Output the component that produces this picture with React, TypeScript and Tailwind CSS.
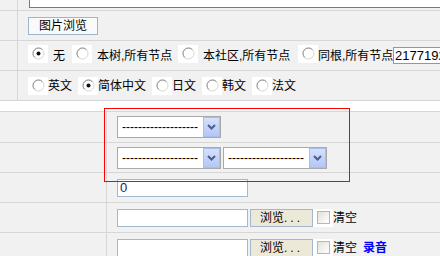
import React from "react";

function Radio({ checked = false, className = "" }: { checked?: boolean; className?: string }) {
  return (
    <span className={`inline-flex h-[18px] w-[20px] shrink-0 items-center justify-center bg-white ${className}`}>
      <svg width="13" height="13" viewBox="0 0 13 13">
        <circle cx="6.5" cy="6.5" r="5.5" fill="#fff" stroke="#d8d6cc" strokeWidth="1" />
        <path d="M2.61 10.39A5.5 5.5 0 0 1 10.39 2.61" fill="none" stroke="#8c8c8c" strokeWidth="1" />
        {checked && <circle cx="6.5" cy="6.5" r="2" fill="#111" />}
      </svg>
    </span>
  );
}

function Checkbox() {
  return (
    <span className="inline-flex h-[18px] w-[20px] shrink-0 items-center justify-center bg-white">
      <span className="block h-[13px] w-[13px] border border-[#b9b7aa] bg-gradient-to-br from-[#e2e1da] to-white" />
    </span>
  );
}

function Select({ className = "" }: { className?: string }) {
  return (
    <div className={`flex h-[22px] w-[104px] items-center border border-[#a9a9a9] bg-white ${className}`}>
      <span className="ml-[4px] flex-1 text-[12px] leading-none text-black">-------------------</span>
      <span className="flex h-[20px] w-[17px] items-center justify-center border border-[#a8bdf0] bg-gradient-to-b from-[#d5e0fc] to-[#b3c7f6]">
        <svg width="9" height="6" viewBox="0 0 9 6">
          <path d="M1 1l3.5 3.5L8 1" fill="none" stroke="#4a5f8c" strokeWidth="2" />
        </svg>
      </span>
    </div>
  );
}

function FileRow({ record = false }: { record?: boolean }) {
  return (
    <div className="flex items-center">
      <div className="h-[18px] w-[131px] border border-[#a3b8cd] bg-white" />
      <button className="ml-[2px] flex h-[18px] w-[63px] items-center justify-center border border-[#a3b8cd] bg-[#ece9d8] text-[12px] leading-none text-black">
        浏览<span className="tracking-[3px]">...</span>
      </button>
      <Checkbox />
      <span className="text-[12px] leading-none">清空</span>
      {record && <span className="ml-[6px] text-[12px] font-bold leading-none text-[#0000ff]">录音</span>}
    </div>
  );
}

export default function App() {
  return (
    <div className="relative h-[256px] w-[440px] overflow-hidden bg-[#f1f1f1] font-['Liberation_Sans','Noto_Sans_CJK_SC',sans-serif] text-[12px] text-black">
      {/* upper table */}
      <div className="flex h-[11px] border-b border-[#d6d6d6]">
        <div className="w-[18px] shrink-0 border-r border-[#d6d6d6]" />
        <div className="flex-1 pl-[11px]">
          <div className="h-[8px] border border-t-0 border-r-0 border-[#7a7a7a] bg-white" />
        </div>
      </div>
      <div className="flex h-[30px] border-b border-[#d6d6d6]">
        <div className="w-[18px] shrink-0 border-r border-[#d6d6d6]" />
        <div className="flex flex-1 items-center pl-[10px]">
          <button className="flex h-[18px] w-[70px] items-center justify-center border border-[#9cb6cf] bg-[#fafafa] text-[12px] leading-none">
            图片浏览
          </button>
        </div>
      </div>
      <div className="flex h-[30px] border-b border-[#d6d6d6]">
        <div className="w-[18px] shrink-0 border-r border-[#d6d6d6]" />
        <div className="flex flex-1 items-center whitespace-nowrap pl-[10px]">
          <Radio checked className="-mt-[4px]" />
          <span className="ml-[5px] w-[12px]">无</span>
          <Radio className="ml-[7px] -mt-[4px]" />
          <span className="ml-[5px] w-[75px]">本树,所有节点</span>
          <Radio className="ml-[6px] -mt-[4px]" />
          <span className="ml-[5px] w-[87px]">本社区,所有节点</span>
          <Radio className="ml-[8px] -mt-[4px]" />
          <span className="w-[75px]">同根,所有节点</span>
          <div className="flex h-[17px] w-[120px] shrink-0 items-center border border-[#7f9db9] bg-white pl-[1px] text-[13px] leading-none">
            217719250
          </div>
        </div>
      </div>
      <div className="flex h-[30px] border-b border-[#d6d6d6]">
        <div className="w-[18px] shrink-0 border-r border-[#d6d6d6]" />
        <div className="flex flex-1 items-center whitespace-nowrap pl-[10px]">
          <Radio />
          <span className="w-[24px]">英文</span>
          <Radio checked className="ml-[6px]" />
          <span className="w-[48px]">简体中文</span>
          <Radio className="ml-[6px]" />
          <span className="w-[24px]">日文</span>
          <Radio className="ml-[6px]" />
          <span className="w-[24px]">韩文</span>
          <Radio className="ml-[6px]" />
          <span className="w-[24px]">法文</span>
        </div>
      </div>
      <div className="h-[10px] bg-white" />

      {/* lower table */}
      <div className="border-t border-[#d6d6d6]">
        <div className="flex h-[31px] border-b border-[#d6d6d6]">
          <div className="w-[107px] shrink-0 border-r border-[#d6d6d6]" />
          <div className="flex flex-1 items-center pl-[10px]">
            <Select />
          </div>
        </div>
        <div className="flex h-[30px] border-b border-[#d6d6d6]">
          <div className="w-[107px] shrink-0 border-r border-[#d6d6d6]" />
          <div className="flex flex-1 items-center pl-[10px]">
            <Select />
            <Select className="ml-[2px]" />
          </div>
        </div>
        <div className="flex h-[30px] border-b border-[#d6d6d6]">
          <div className="w-[107px] shrink-0 border-r border-[#d6d6d6]" />
          <div className="flex flex-1 items-center pl-[10px]">
            <div className="flex h-[18px] w-[131px] items-center border border-[#a3b8cd] bg-white pl-[2px] text-[13px] leading-none text-[#202070]">
              0
            </div>
          </div>
        </div>
        <div className="flex h-[30px] border-b border-[#d6d6d6]">
          <div className="w-[107px] shrink-0 border-r border-[#d6d6d6]" />
          <div className="flex flex-1 items-center pl-[10px]">
            <FileRow />
          </div>
        </div>
        <div className="flex h-[30px] border-b border-[#d6d6d6]">
          <div className="w-[107px] shrink-0 border-r border-[#d6d6d6]" />
          <div className="flex flex-1 items-center pl-[10px]">
            <FileRow record />
          </div>
        </div>
      </div>

      {/* red highlight overlay */}
      <div className="pointer-events-none absolute left-[104px] top-[108px] h-[74px] w-[246px] border border-[#ff0000]" />
    </div>
  );
}
